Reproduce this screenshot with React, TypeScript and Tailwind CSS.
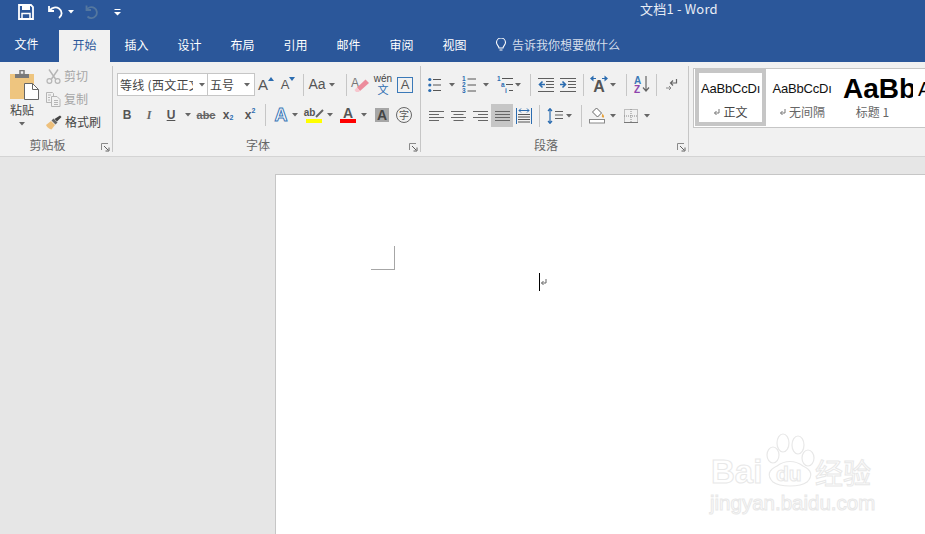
import * as React from 'react';

const cjk = { fontFamily: '"Noto Sans CJK SC", "Noto Sans", sans-serif' };
const liberation = { fontFamily: '"Liberation Sans", Arial, sans-serif' };

const Caret = ({ className = '', color = '#666' }: { className?: string; color?: string }) => (
  <svg width="6" height="4" viewBox="0 0 6 4" className={className}>
    <path d="M0 0h6L3 3.5z" fill={color} />
  </svg>
);

const CaretBtn = ({ w = 'w-[12px]' }: { w?: string }) => (
  <div className={`${w} h-[22px] flex items-center justify-center shrink-0`}>
    <Caret />
  </div>
);

const Btn = ({ children, className = 'w-[22px]' }: { children?: React.ReactNode; className?: string }) => (
  <div className={`${className} h-[22px] flex items-center justify-center shrink-0`}>{children}</div>
);

const Sep = ({ className = '' }: { className?: string }) => (
  <div className={`w-px h-[22px] bg-[#c6c6c6] shrink-0 ${className}`} />
);

const Launcher = () => (
  <svg width="9" height="9" viewBox="0 0 9 9">
    <path d="M0.5 7V0.5H7" fill="none" stroke="#8a8a8a" />
    <path d="M3 3l4 4M8 4.5V8H4.5" fill="none" stroke="#5f5f5f" />
  </svg>
);

const Group = ({ label, width, children }: { label: string; width: string; children: React.ReactNode }) => (
  <div className={`${width} shrink-0 relative flex flex-col pt-[11px]`}>
    <div className="h-[61px]">{children}</div>
    <div className="h-[22px] flex items-center justify-center text-[12px] text-[#666] pb-[1px] pr-[18px]">{label}</div>
    <div className="absolute right-[3px] bottom-[4px] flex">
      <Launcher />
    </div>
    <div className="absolute right-0 top-[4px] bottom-[4px] w-px bg-[#c6c6c6]" />
  </div>
);

const Lines = ({ kind }: { kind: 'left' | 'center' | 'right' | 'justify' }) => {
  const rows = [1.5, 4.5, 7.5, 10.5];
  const short = kind !== 'justify';
  return (
    <svg width="15" height="12" viewBox="0 0 15 12">
      {rows.map((y, i) => {
        const w = short && i % 2 === 1 ? 10 : 15;
        const x = kind === 'center' ? (15 - w) / 2 : kind === 'right' ? 15 - w : 0;
        return <path key={y} d={`M${x} ${y}h${w}`} stroke="#666" strokeWidth="1" />;
      })}
    </svg>
  );
};

const Bullets = () => (
  <svg width="14" height="16" viewBox="0 0 14 16">
    {[2.5, 8, 13.5].map((y) => (
      <g key={y}>
        <circle cx="1.8" cy={y} r="1.6" fill="#2b6cb0" />
        <path d={`M5 ${y}h8`} stroke="#555" />
      </g>
    ))}
  </svg>
);

const Numbering = () => (
  <svg width="14" height="17" viewBox="0 0 14 17">
    {['1', '2', '3'].map((n, i) => (
      <g key={n}>
        <text x="0" y={5 + i * 6} fontSize="6.500" fontWeight="700" fill="#2b6cb0" fontFamily="Liberation Sans">{n}</text>
        <path d={`M5.500 ${3 + i * 6}h8.500`} stroke="#555" />
      </g>
    ))}
  </svg>
);

const Multilevel = () => (
  <svg width="16" height="17" viewBox="0 0 16 17">
    <text x="0" y="5" fontSize="6.500" fontWeight="700" fill="#2b6cb0" fontFamily="Liberation Sans">1</text>
    <path d="M5 2.500h11" stroke="#555" />
    <text x="4" y="11" fontSize="6.500" fontWeight="700" fill="#2b6cb0" fontFamily="Liberation Sans">a</text>
    <path d="M9 8.500h7" stroke="#555" />
    <text x="8" y="17" fontSize="6.500" fontWeight="700" fill="#2b6cb0" fontFamily="Liberation Sans">i</text>
    <path d="M12 14.500h4" stroke="#555" />
  </svg>
);

const Indent = ({ out }: { out?: boolean }) => (
  <svg width="16" height="14" viewBox="0 0 16 14">
    <path d="M0 0.5h16M0 13.5h16M8 3.5h8M8 6.5h8M8 9.5h8" stroke="#5f5f5f" />
    {out ? (
      <path d="M7 6.5H2M4.5 3.5l-3 3 3 3" fill="none" stroke="#2b6cb0" strokeWidth="1.6" />
    ) : (
      <path d="M0 6.5h5M2.5 3.5l3 3-3 3" fill="none" stroke="#2b6cb0" strokeWidth="1.6" />
    )}
  </svg>
);

const Distributed = () => (
  <svg width="16" height="16" viewBox="0 0 16 16">
    <path d="M0.5 0v16M15.5 0v16" stroke="#2b6cb0" />
    <path d="M3 2.5h10M5 0.5l-2 2 2 2M11 0.5l2 2-2 2" fill="none" stroke="#2b6cb0" />
    <path d="M2 6.5h12M2 9h12M2 11.5h12M2 14h12" stroke="#555" />
  </svg>
);

const LineSpacing = () => (
  <svg width="16" height="16" viewBox="0 0 16 16">
    <path d="M3 1v14M1 3l2-2.4L5 3M1 13l2 2.4L5 13" fill="none" stroke="#2b6cb0" strokeWidth="1.2" />
    <path d="M8 3.5h8M8 7h8M8 10.5h8" stroke="#5f5f5f" />
  </svg>
);

const Shading = () => (
  <svg width="17" height="17" viewBox="0 0 17 17">
    <path d="M7.5 1l5 5-4 4-5-5z" fill="#fff" stroke="#666" />
    <path d="M13.5 6.5c1 1.3 1.6 2.2 1.6 3 0 .9-.7 1.2-1.2 1.2s-1.1-.4-1.1-1.2c0-.8.3-1.7.7-3z" fill="#e8a33d" />
    <rect x="0.5" y="12.5" width="15" height="3.5" fill="#fff" stroke="#888" />
  </svg>
);

const Borders = () => (
  <svg width="14" height="14" viewBox="0 0 14 14">
    <rect x="0.5" y="0.5" width="13" height="13" fill="none" stroke="#8a8a8a" strokeDasharray="1 1" />
    <path d="M7 0v14M0 7h14" stroke="#8a8a8a" strokeDasharray="1 1" />
    <path d="M0 13.5h14" stroke="#777" />
  </svg>
);

const Scissors = ({ color }: { color: string }) => (
  <svg width="15" height="15" viewBox="0 0 15 15">
    <path d="M3 0.5l6.5 9.5M12 0.5L5.5 10" fill="none" stroke={color} strokeWidth="1.4" />
    <circle cx="3.4" cy="12" r="2.4" fill="none" stroke={color} strokeWidth="1.2" />
    <circle cx="11.6" cy="12" r="2.4" fill="none" stroke={color} strokeWidth="1.2" />
  </svg>
);

const CopyIcon = ({ color }: { color: string }) => (
  <svg width="15" height="15" viewBox="0 0 15 15">
    <path d="M0.5 0.5h6l1 1v9h-7z" fill="#f1f1f1" stroke={color} />
    <path d="M5.5 4.5h5.5l3 3v7h-8.500z" fill="#f1f1f1" stroke={color} />
    <path d="M2 3h3M2 5.500h2M2 8h2M8 8.500h4M8 10.500h4M8 12.500h4" stroke={color} />
  </svg>
);

const Brush = () => (
  <svg width="16" height="15" viewBox="0 0 16 15">
    <path d="M0 10l5-4 4 4-3.500 4.500C3.500 14 1 12.500 0 10z" fill="#eec07c" />
    <path d="M5.500 5.500l4 4 2-2-4-4z" fill="#666" />
    <path d="M8.500 4l2.500 2.500 4.500-4.500L14 0.500z" fill="#444" />
  </svg>
);

const Paste = () => (
  <svg width="29" height="30" viewBox="0 0 29 30">
    <rect x="0" y="4" width="24" height="25" fill="#eec57f" />
    <path d="M5 4h14v4H5z" fill="#7a7a7a" />
    <path d="M10 0.500h4v4h-4z" fill="none" stroke="#7a7a7a" strokeWidth="1.500" />
    <path d="M14.500 13.500h8l6 6v10h-14z" fill="#fff" stroke="#666" />
    <path d="M22.500 13.500v6h6" fill="none" stroke="#666" />
  </svg>
);

const Eraser = () => (
  <div className="relative w-[20px] h-[18px]">
    <span className="absolute left-0 -top-[2px] text-[12px] text-[#777]" style={liberation}>A</span>
    <svg width="20" height="18" viewBox="0 0 20 18" className="absolute left-0 top-0">
      <path d="M9 15l9-8-3.500-3.500L6 11.500z" fill="#ec8c9c" />
      <path d="M6 11.500L9 15l-1.500 1H5l-1.500-2z" fill="#f7c6ce" />
    </svg>
  </div>
);

const SpacingA = () => (
  <div className="relative w-[20px] h-[20px] flex items-end justify-center">
    <svg width="20" height="8" viewBox="0 0 20 8" className="absolute top-0 left-0">
      <path d="M1 3.500l3.500-3v6zM19 3.500l-3.500-3v6z" fill="#2b6cb0" />
      <path d="M4 3.500h3M13 3.500h3" stroke="#2b6cb0" />
    </svg>
    <span className="text-[16px] leading-[16px] font-bold text-[#555]" style={liberation}>A</span>
  </div>
);

const Sort = () => (
  <div className="flex items-center">
    <div className="flex flex-col text-[10px] leading-[9px] font-bold" style={liberation}>
      <span className="text-[#3b79b8]">A</span>
      <span className="text-[#8e44ad]">Z</span>
    </div>
    <svg width="8" height="17" viewBox="0 0 8 17" className="ml-[1px]">
      <path d="M4 0v15M1 11.500L4 15l3-3.500" fill="none" stroke="#666" strokeWidth="1.200" />
    </svg>
  </div>
);

const Pilcrow = () => (
  <svg width="12" height="13" viewBox="0 0 12 13">
    <path d="M10.500 1v4H5M7 2.500L4.500 5 7 7.500" fill="none" stroke="#666" strokeWidth="1.200" />
    <path d="M0 10h4.500M3 8l2 2-2 2" fill="none" stroke="#888" />
  </svg>
);

const Return = ({ color = '#777' }: { color?: string }) => (
  <svg width="7" height="8" viewBox="0 0 7 8" className="shrink-0">
    <path d="M6 1v4H1.500M3.500 3L1.500 5l2 2" fill="none" stroke={color} />
  </svg>
);

const FontSizeBtn = ({ up }: { up?: boolean }) => (
  <Btn>
    <div className="relative flex items-end">
      <span className={`${up ? 'text-[15px]' : 'text-[13px]'} leading-[15px] text-[#555]`} style={liberation}>A</span>
      <svg width="6" height="4" viewBox="0 0 6 4" className="mb-[11px]">
        <path d={up ? 'M0 4h6L3 0z' : 'M0 0h6L3 4z'} fill="#2b6cb0" />
      </svg>
    </div>
  </Btn>
);

const FontGroup = () => (
  <Group label="字体" width="w-[308px]">
    <div className="flex items-center h-[23px] pl-[4px]">
      <div className="w-[91px] h-[23px] bg-white border border-[#c6c6c6] flex items-center pl-[2px] text-[12px] text-[#444] overflow-hidden shrink-0">
        <span className="w-[73px] overflow-hidden whitespace-nowrap tracking-[0.3px]">等线 (西文正文)</span>
        <Caret className="ml-[6px]" />
      </div>
      <div className="w-[47px] h-[23px] bg-white border border-[#c6c6c6] border-l-0 flex items-center pl-[2px] text-[12px] text-[#444] shrink-0">
        <span className="w-[33px]">五号</span>
        <Caret className="ml-[1px]" />
      </div>
      <FontSizeBtn up />
      <FontSizeBtn />
      <Sep className="ml-[4px]" />
      <div className="w-[31px] ml-[2px] flex items-center justify-center gap-[3px] shrink-0">
        <span className="text-[14px] text-[#555]" style={liberation}>Aa</span>
        <Caret />
      </div>
      <Sep className="ml-[9px]" />
      <Btn className="w-[22px] ml-[3px]"><Eraser /></Btn>
      <Btn>
        <div className="flex flex-col items-center">
          <span className="text-[10px] text-[#444] leading-[10px]" style={liberation}>wén</span>
          <span className="text-[11px] text-[#2b6cb0] leading-[11px]">文</span>
        </div>
      </Btn>
      <Btn>
        <div className="w-[16px] h-[16px] border border-[#3b79b8] flex items-center justify-center text-[13px] text-[#555]" style={liberation}>A</div>
      </Btn>
    </div>
    <div className="flex items-center h-[22px] pl-[3px] mt-[8px]">
      <Btn><span className="text-[12px] font-bold text-[#555]" style={liberation}>B</span></Btn>
      <Btn><span className="text-[12px] italic font-bold text-[#666]" style={{ fontFamily: '"Liberation Serif", serif' }}>I</span></Btn>
      <Btn><span className="text-[12px] font-bold underline text-[#555]" style={liberation}>U</span></Btn>
      <CaretBtn />
      <Btn className="w-[22px] ml-px"><span className="text-[11px] font-bold text-[#666] line-through" style={liberation}>abc</span></Btn>
      <Btn>
        <span className="text-[12px] font-bold text-[#555]" style={liberation}>x</span>
        <span className="text-[7px] font-bold text-[#2b6cb0] mt-[7px]" style={liberation}>2</span>
      </Btn>
      <Btn>
        <span className="text-[12px] font-bold text-[#555]" style={liberation}>x</span>
        <span className="text-[7px] font-bold text-[#2b6cb0] mb-[7px]" style={liberation}>2</span>
      </Btn>
      <Sep className="ml-[4px]" />
      <Btn className="w-[22px] ml-[4px]">
        <span className="text-[18px] font-bold text-white [-webkit-text-stroke:1px_#3b79b8]" style={liberation}>A</span>
      </Btn>
      <CaretBtn w="w-[6px]" />
      <Btn className="w-[22px] ml-[5px]">
        <div className="flex flex-col items-center w-[16px]">
          <div className="flex items-center h-[12px]">
            <span className="text-[10px] font-bold text-[#555] leading-[10px]" style={liberation}>ab</span>
            <svg width="9" height="9" viewBox="0 0 9 9"><path d="M1 8l7-7" stroke="#666" strokeWidth="2" /></svg>
          </div>
          <div className="w-[16px] h-[4px] bg-[#ffff00]" />
        </div>
      </Btn>
      <CaretBtn w="w-[10px]" />
      <Btn className="w-[22px] ml-[2px]">
        <div className="flex flex-col items-center w-[16px]">
          <span className="text-[14px] font-bold text-[#555] leading-[12px]" style={liberation}>A</span>
          <div className="w-[16px] h-[4px] bg-[#ff0000]" />
        </div>
      </Btn>
      <CaretBtn w="w-[10px]" />
      <Btn className="w-[22px] ml-[2px]">
        <div className="w-[14px] h-[14px] bg-[#a6a6a6] flex items-center justify-center text-[14px] font-bold text-[#444]" style={liberation}>A</div>
      </Btn>
      <Btn>
        <div className="w-[16px] h-[16px] rounded-full border border-[#666] flex items-center justify-center text-[10px] leading-[10px] text-[#555]">字</div>
      </Btn>
    </div>
  </Group>
);

const ParagraphGroup = () => (
  <Group label="段落" width="w-[268px]">
    <div className="flex items-center h-[23px] pl-[3px]">
      <Btn><Bullets /></Btn>
      <CaretBtn />
      <Btn><Numbering /></Btn>
      <CaretBtn />
      <Btn className="w-[18px] ml-[4px]"><Multilevel /></Btn>
      <CaretBtn w="w-[8px]" />
      <Sep className="ml-[8px]" />
      <Btn className="w-[22px] ml-[4px]"><Indent out /></Btn>
      <Btn><Indent /></Btn>
      <Sep className="ml-[4px]" />
      <Btn className="w-[22px] ml-[4px]"><SpacingA /></Btn>
      <CaretBtn w="w-[6px]" />
      <Sep className="ml-[10px]" />
      <Btn className="w-[22px] ml-[4px]"><Sort /></Btn>
      <Sep className="ml-[3px]" />
      <Btn className="w-[22px] ml-[4px]"><Pilcrow /></Btn>
    </div>
    <div className="flex items-center h-[23px] pl-[4px] mt-[8px]">
      <Btn><Lines kind="left" /></Btn>
      <Btn><Lines kind="center" /></Btn>
      <Btn><Lines kind="right" /></Btn>
      <div className="w-[22px] h-[23px] bg-[#c6c6c6] flex items-center justify-center shrink-0"><Lines kind="justify" /></div>
      <Btn><Distributed /></Btn>
      <Sep className="ml-[4px]" />
      <Btn className="w-[20px] ml-[5px]"><LineSpacing /></Btn>
      <CaretBtn w="w-[8px]" />
      <Sep className="ml-[8px]" />
      <Btn className="w-[22px] ml-[4px]"><Shading /></Btn>
      <CaretBtn w="w-[10px]" />
      <Btn className="w-[22px] ml-[2px]"><Borders /></Btn>
      <CaretBtn w="w-[10px]" />
    </div>
  </Group>
);

const ClipboardGroup = () => (
  <Group label="剪贴板" width="w-[113px]">
    <div className="flex h-[61px]">
      <div className="w-[46px] flex flex-col items-center shrink-0 -mt-[3px]">
        <div className="ml-[2px]"><Paste /></div>
        <span className="text-[12px] leading-[16px] text-[#444] mt-[2px] -ml-[2px]">粘贴</span>
        <Caret className="mt-[4px] -ml-[2px]" />
      </div>
      <div className="flex flex-col gap-[1px] -mt-[8px]">
        <div className="h-[22px] flex items-center gap-[3px]">
          <Scissors color="#b5b5b5" />
          <span className="text-[12px] text-[#a6a6a6]">剪切</span>
        </div>
        <div className="h-[22px] flex items-center gap-[3px]">
          <CopyIcon color="#b5b5b5" />
          <span className="text-[12px] text-[#a6a6a6]">复制</span>
        </div>
        <div className="h-[22px] flex items-center gap-[3px]">
          <Brush />
          <span className="text-[12px] text-[#444]">格式刷</span>
        </div>
      </div>
    </div>
  </Group>
);

const StyleItem = ({ label, selected, ret, className = '', labelClass = '', children }: { label: string; selected?: boolean; ret?: boolean; className?: string; labelClass?: string; children: React.ReactNode }) => (
  <div className={`h-[57px] flex flex-col items-center overflow-hidden shrink-0 ${selected ? 'border-[4px] border-[#c6c6c6] bg-white' : 'border-[4px] border-transparent'} ${className}`}>
    <div className="h-[32px] w-full flex items-center justify-center overflow-hidden whitespace-nowrap">{children}</div>
    <div className={`flex items-center gap-[3px] text-[12px] leading-[14px] ${selected ? 'text-[#444]' : 'text-[#666]'} ${labelClass}`}>
      {ret && <Return />}
      <span>{label}</span>
    </div>
  </div>
);

const Ribbon = () => (
  <div className="h-[94px] bg-[#f1f1f1] border-b border-[#d4d4d4] flex shrink-0 box-content">
    <ClipboardGroup />
    <FontGroup />
    <ParagraphGroup />
    <div className="flex-1 pl-[4px] pt-[6px] overflow-hidden">
      <div className="h-[60px] w-[300px] bg-white border border-[#c6c6c6] border-r-0 flex overflow-hidden">
        <div className="w-[1px] shrink-0" />
        <StyleItem label="正文" selected ret className="w-[71px]">
          <span className="text-[13px] text-[#111] tracking-[-0.2px]" style={liberation}>AaBbCcDı</span>
        </StyleItem>
        <StyleItem label="无间隔" ret className="w-[72px]">
          <span className="text-[13px] text-[#111] tracking-[-0.2px]" style={liberation}>AaBbCcDı</span>
        </StyleItem>
        <StyleItem label="标题 1" className="w-[79px]" labelClass="mr-[10px]">
          <span className="text-[28px] font-bold text-black w-full pl-[1px] overflow-hidden" style={liberation}>AaBb</span>
        </StyleItem>
        <span className="text-[20px] text-black leading-[40px] pl-[1px]" style={liberation}>A</span>
      </div>
    </div>
  </div>
);

const tabs = ['插入', '设计', '布局', '引用', '邮件', '审阅', '视图'];

const Watermark = () => (
  <div className="absolute left-[707px] top-[432px] w-[170px] h-[84px] select-none">
    <svg width="170" height="60" viewBox="0 0 170 60" className="absolute left-0 top-0" fill="none" stroke="#e8e8e8" strokeWidth="1.200">
      <ellipse cx="66" cy="23" rx="6" ry="8" />
      <ellipse cx="76" cy="11" rx="6" ry="9" />
      <ellipse cx="91" cy="13" rx="6" ry="9" />
      <ellipse cx="101" cy="26" rx="6" ry="8" />
      <path d="M66 50c-6-6-5-12 4-16 8-6 18-6 26 0 9 4 10 10 4 16-4 3-9 4-17 4s-13-1-17-4z" />
    </svg>
    <span className="absolute left-[4px] top-[20px] text-[33px] font-bold leading-[40px] text-white [-webkit-text-stroke:1px_#e8e8e8]" style={liberation}>Bai</span>
    <span className="absolute left-[69px] top-[31px] text-[21px] font-bold leading-[22px] text-white [-webkit-text-stroke:1px_#e8e8e8]" style={liberation}>du</span>
    <span className="absolute left-[108px] top-[23px] text-[28px] leading-[34px] text-white [-webkit-text-stroke:1px_#e8e8e8] whitespace-nowrap">经验</span>
    <span className="absolute left-[3px] top-[59px] text-[20.5px] leading-[24px] text-white [-webkit-text-stroke:1px_#e8e8e8] whitespace-nowrap" style={liberation}>jingyan.baidu.com</span>
  </div>
);

export default function App() {
  return (
    <div className="relative w-full h-[534px] overflow-hidden flex flex-col bg-[#e6e6e6]" style={cjk}>
      {/* Title bar */}
      <div className="h-[30px] bg-[#2b579a] flex items-center shrink-0 text-white pb-[6px]">
        <div className="ml-[18px] w-[16px] h-[16px] flex">
          <svg width="16" height="16" viewBox="0 0 16 16">
            <path d="M1 1h12l2 2v12H1z" fill="none" stroke="#fff" strokeWidth="1.800" />
            <path d="M4 1.500h8v4.500H4z" fill="#fff" />
            <path d="M4 9.500h8V15H4z" fill="none" stroke="#fff" strokeWidth="1.500" />
          </svg>
        </div>
        <svg width="17" height="14" viewBox="0 0 17 14" className="ml-[14px]">
          <path d="M1 1v5h5M1.500 5.500C4 2.500 8 1.500 11 3.500c3.500 2.500 3.500 7 0 9.500" fill="none" stroke="#fff" strokeWidth="1.800" />
        </svg>
        <Caret className="ml-[3px]" color="#fff" />
        <svg width="14" height="14" viewBox="0 0 14 14" className="ml-[10px]">
          <path d="M2.500 0.500V5H7M2.500 5A5.500 5.500 0 1 1 3.500 11.500" fill="none" stroke="#54779f" strokeWidth="1.800" />
        </svg>
        <svg width="7" height="7" viewBox="0 0 7 7" className="ml-[16px]">
          <path d="M0.500 0.500h6" stroke="#fff" />
          <path d="M0 3h7L3.500 6.500z" fill="#fff" />
        </svg>
        <span className="ml-[519px] text-[13px] tracking-[0.2px] leading-[16px] -mt-[6px] text-[#e8edf5] whitespace-nowrap">文档1 - Word</span>
      </div>

      {/* Tabs */}
      <div className="h-[32px] bg-[#2b579a] flex shrink-0 text-[12px] text-white">
        <div className="w-[53px] flex items-center justify-center pb-[5px]">文件</div>
        <div className="w-[51px] ml-[6px] bg-[#f1f1f1] text-[#2b579a] flex items-center justify-center pb-[2px]">开始</div>
        {tabs.map((t) => (
          <div key={t} className="w-[53px] flex items-center justify-center pb-[2px]">{t}</div>
        ))}
        <div className="flex items-center ml-[14px] text-[#d5deeb] pb-[2px]">
          <svg width="12" height="14" viewBox="0 0 12 14">
            <path d="M4 10c0-2-2.500-3-2.500-5.500a4.500 4.500 0 0 1 9 0C10.500 7 8 8 8 10zM4.500 12h3" fill="none" stroke="#fff" strokeWidth="1.100" />
          </svg>
          <span className="ml-[5px]">告诉我你想要做什么</span>
        </div>
      </div>

      <Ribbon />

      {/* Document canvas */}
      <div className="flex-1 pl-[275px] pt-[17px] flex">
        <div className="flex-1 bg-white border-l border-t border-[#c6c6c6] pl-[95px] pt-[71px]">
          <div className="w-[24px] h-[24px] border-r border-b border-[#a6a6a6]" />
          <div className="ml-[168px] mt-[3px] flex items-center h-[18px]">
            <div className="w-px h-[18px] bg-black" />
            <Return color="#666" />
          </div>
        </div>
      </div>

      <Watermark />
    </div>
  );
}
